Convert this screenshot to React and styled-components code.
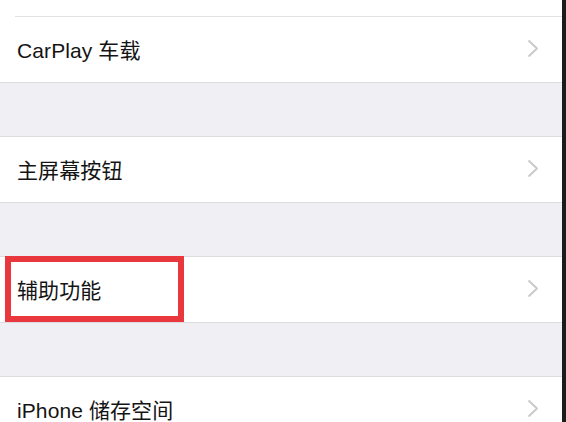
import React from 'react'
import styled, { createGlobalStyle } from 'styled-components'

const GlobalStyle = createGlobalStyle`
  html, body {
    margin: 0;
    padding: 0;
    background: #efeff4;
  }
  body {
    font-family: "Liberation Sans", "Noto Sans CJK SC", sans-serif;
  }
`

const Screen = styled('div')`
  display: flex;
  width: 566px;
  height: 422px;
  overflow: hidden;
`

const Page = styled('div')`
  flex: 1;
  display: flex;
  flex-direction: column;
  background: #efeff4;
`

const EdgeStrip = styled('div')`
  width: 4px;
  background: #1c1c1e;
`

const Group = styled('section')`
  background: #fff;
  border-top: ${p => (p.cut ? 'none' : '1px solid #dcdce0')};
  border-bottom: 1px solid #dcdce0;
  flex-shrink: 0;
`

const Spacer = styled('div')`
  height: 53px;
  flex-shrink: 0;
`

const CutRow = styled('div')`
  height: 16px;
  border-bottom: 1px solid #e2e2e6;
  margin-left: 15px;
`

const Row = styled('div')`
  position: relative;
  display: flex;
  align-items: center;
  justify-content: space-between;
  height: 65px;
  padding: 0 23px 2px 17px;
  box-sizing: border-box;
`

const Label = styled('span')`
  font-size: 21px;
  color: #141414;
  letter-spacing: 0.1px;
`

const Highlight = styled('div')`
  position: absolute;
  left: 5px;
  top: -1px;
  width: 179px;
  height: 66px;
  box-sizing: border-box;
  border: 6px solid #e9383d;
  pointer-events: none;
`

const Chevron = () => (
  <svg width='12' height='19' viewBox='0 0 12 19'>
    <path d='M2 2 L10 9.5 L2 17' fill='none' stroke='#c7c7cc' strokeWidth='1.8' strokeLinecap='round' strokeLinejoin='round' />
  </svg>
)

const SettingsRow = ({ label, marked }) => (
  <Row>
    {marked && <Highlight />}
    <Label>{label}</Label>
    <Chevron />
  </Row>
)

const App = () => {
  return (
    <Screen>
      <GlobalStyle />
      <Page>
        <Group cut>
          <CutRow />
          <SettingsRow label='CarPlay 车载' />
        </Group>
        <Spacer />
        <Group>
          <SettingsRow label='主屏幕按钮' />
        </Group>
        <Spacer />
        <Group>
          <SettingsRow label='辅助功能' marked />
        </Group>
        <Spacer />
        <Group>
          <SettingsRow label='iPhone 储存空间' />
        </Group>
      </Page>
      <EdgeStrip />
    </Screen>
  )
}

export default App
